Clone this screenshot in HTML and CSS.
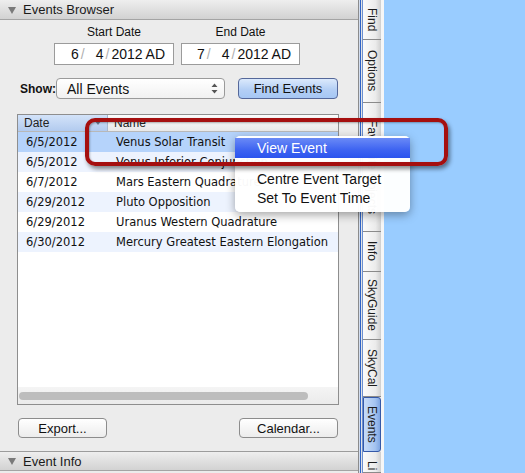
FILE: index.html
```html
<!DOCTYPE html>
<html lang="en">
<head>
    <meta charset="UTF-8">
    <title>Events Browser</title>
    <link rel="stylesheet" href="styles.css">
</head>
<body>
    <div class="app">
        <div class="panel">
            <div class="section-head"><span class="disclosure"></span>Events Browser</div>
            <div class="browser">
                <div class="dates">
                    <div class="date-group">
                        <div class="date-label">Start Date</div>
                        <div class="date-field start">
                            <span>6</span><span class="sep">/</span><span class="day">4</span><span class="sep">/</span><span>2012</span><span class="era">AD</span>
                        </div>
                    </div>
                    <div class="date-group">
                        <div class="date-label">End Date</div>
                        <div class="date-field end">
                            <span>7</span><span class="sep">/</span><span class="day">4</span><span class="sep">/</span><span>2012</span><span class="era">AD</span>
                        </div>
                    </div>
                </div>
                <div class="show-row">
                    <span class="show-label">Show:</span>
                    <div class="select">
                        <span class="select-value">All Events</span>
                        <svg class="stepper" width="7" height="11" viewBox="0 0 7 11">
                            <path d="M0.5 4 L3.5 0.5 L6.5 4 Z M0.5 7 L3.5 10.5 L6.5 7 Z" fill="#555"/>
                        </svg>
                    </div>
                    <button class="btn btn-blue">Find Events</button>
                </div>
                <div class="table">
                    <div class="thead">
                        <div class="th th-date sorted">Date<span class="sort"></span></div>
                        <div class="th th-name">Name</div>
                    </div>
                    <div class="tbody">
                        <div class="tr selected"><span class="td-date">6/5/2012</span><span>Venus Solar Transit</span></div>
                        <div class="tr alt"><span class="td-date">6/5/2012</span><span>Venus Inferior Conjunction</span></div>
                        <div class="tr"><span class="td-date">6/7/2012</span><span>Mars Eastern Quadrature</span></div>
                        <div class="tr alt"><span class="td-date">6/29/2012</span><span>Pluto Opposition</span></div>
                        <div class="tr"><span class="td-date">6/29/2012</span><span>Uranus Western Quadrature</span></div>
                        <div class="tr alt"><span class="td-date">6/30/2012</span><span>Mercury Greatest Eastern Elongation</span></div>
                    </div>
                    <div class="hscroll"><div class="thumb"></div></div>
                </div>
                <div class="actions">
                    <button class="btn export">Export...</button>
                    <button class="btn calendar">Calendar...</button>
                </div>
            </div>
            <div class="section-head foot"><span class="disclosure"></span>Event Info</div>
        </div>
        <div class="divider"></div>
        <div class="tabs">
            <div class="tab t-find">Find</div>
            <div class="tab t-options">Options</div>
            <div class="tab t-fav">Favourite Objects</div>
            <div class="tab t-info">Info</div>
            <div class="tab t-guide">SkyGuide</div>
            <div class="tab t-cal">SkyCal</div>
            <div class="tab t-events active">Events</div>
            <div class="tab t-live">Li</div>
        </div>
        <div class="sky"></div>
    </div>

    <!-- right-click menu on the selected row -->
    <div class="menu">
        <div class="menu-item hot">View Event</div>
        <div class="menu-sep"></div>
        <div class="menu-item">Centre Event Target</div>
        <div class="menu-item">Set To Event Time</div>
    </div>
    <div class="callout"></div>
</body>
</html>
```

FILE: styles.css
```css
body {
    margin: 0;
    font-family: "Liberation Sans", Arial, sans-serif;
    font-size: 13px;
    color: #111;
    overflow: hidden;
}

.app {
    display: flex;
    height: 473px;
    width: 525px;
}

/* ---- left drawer ---- */

.panel {
    width: 358px;
    display: flex;
    flex-direction: column;
    background: #ececec;
}

.section-head {
    height: 19px;
    line-height: 19px;
    border-bottom: 1px solid #a4a4a4;
    background: linear-gradient(#eeeeee, #d2d2d2);
    font-size: 13px;
    padding-left: 8px;
    display: flex;
    align-items: center;
    color: #1a1a1a;
}

.section-head.foot {
    border-top: 1px solid #9c9c9c;
    height: 18px;
    margin-bottom: 2px;
}

.disclosure {
    width: 0;
    height: 0;
    border-left: 4px solid transparent;
    border-right: 4px solid transparent;
    border-top: 7px solid #7a7a7a;
    margin-right: 7px;
    margin-top: 1px;
}

.browser {
    flex: 1;
    display: flex;
    flex-direction: column;
    padding: 0 19px 0 17px;
}

.dates {
    display: flex;
    gap: 7px;
    padding-left: 37px;
    margin-top: 5px;
}

.date-group {
    display: flex;
    flex-direction: column;
    align-items: center;
}

.date-label {
    font-size: 12px;
    line-height: 14px;
}

.date-field {
    margin-top: 4px;
    height: 20px;
    border: 1px solid #9b9b9b;
    background: #fff;
    display: flex;
    align-items: center;
    justify-content: flex-end;
    padding-right: 8px;
    font-size: 14px;
    box-sizing: content-box;
}

.date-field.start { width: 110px; }
.date-field.end { width: 109px; }

.date-field .sep {
    color: #b0b0b0;
    margin: 0 2px;
}

.date-field .day { margin-left: 9px; }
.date-field .era { margin-left: 3px; }

.show-row {
    display: flex;
    align-items: center;
    margin-top: 13px;
    height: 21px;
}

.show-label {
    font-weight: bold;
    font-size: 12px;
    margin-left: 3px;
    width: 36px;
}

.select {
    width: 151px;
    height: 19px;
    border: 1px solid #9a9a9a;
    border-radius: 4px;
    background: linear-gradient(#ffffff, #f1f1f1);
    display: flex;
    align-items: center;
    justify-content: space-between;
    padding: 0 6px 0 10px;
    font-size: 14px;
}

.stepper {
    display: block;
}

.btn {
    font-family: "Liberation Sans", Arial, sans-serif;
    font-size: 13px;
    height: 21px;
    border: 1px solid #8c8c8c;
    border-radius: 4px;
    background: linear-gradient(#ffffff, #ececec);
    color: #111;
    padding: 0;
}

.btn-blue {
    margin-left: 13px;
    width: 100px;
    background: linear-gradient(#dbe9fc, #b4cff5 55%, #a6c7f4);
    border-color: #55689a;
}

.table {
    margin-top: 15px;
    width: 320px;
    height: 289px;
    border: 1px solid #8e8e8e;
    background: #fff;
    display: flex;
    flex-direction: column;
}

.thead {
    display: flex;
    height: 16px;
    border-bottom: 1px solid #b8b8b8;
    background: linear-gradient(#fcfcfc, #e8e8e8);
    font-size: 12px;
}

.th {
    line-height: 16px;
    padding-left: 6px;
    color: #222;
}

.th-date {
    width: 83px;
    border-right: 1px solid #a8b8d0;
    position: relative;
}

.th-date.sorted {
    background: linear-gradient(#d3e3f9, #b2cbef);
}

.sort {
    position: absolute;
    right: 6px;
    top: 6px;
    border-left: 3px solid transparent;
    border-right: 3px solid transparent;
    border-top: 4px solid #6b7a90;
}

.tbody {
    flex: 1;
    font-family: "DejaVu Sans", sans-serif;
    font-size: 11.5px;
}

.tr {
    display: flex;
    height: 20px;
    line-height: 20px;
    white-space: nowrap;
}

.tr.alt { background: #edf3fe; }
.tr.selected { background: #b5d3fb; }

.td-date {
    width: 90px;
    padding-left: 8px;
}

.hscroll {
    height: 17px;
    background: linear-gradient(#f4f4f4, #ebebeb);
    display: flex;
    align-items: center;
    padding-left: 1px;
}

.thumb {
    width: 289px;
    height: 8px;
    border-radius: 4px;
    background: #bdbdbd;
}

.actions {
    display: flex;
    justify-content: space-between;
    margin-top: 13px;
    padding-left: 1px;
}

.btn.export { width: 89px; height: 20px; }
.btn.calendar { width: 99px; height: 20px; margin-right: 1px; }

/* ---- splitter and side tabs ---- */

.divider {
    width: 5px;
    background: linear-gradient(to right, #8c8c8c 0 1px, #d3def0 1px 2px, #2f63c6 2px 3px, #e4e4e4 3px 4px, #6d90cf 4px 5px);
}

.tabs {
    width: 18px;
    border-right: 3px solid #f6f6f6;
    background: #e6e6e6;
    display: flex;
    flex-direction: column;
    overflow: hidden;
}

.tab {
    writing-mode: vertical-rl;
    flex: none;
    display: flex;
    align-items: center;
    justify-content: center;
    font-size: 12px;
    color: #1c1c1c;
    background: linear-gradient(to right, #fbfbfb, #ebebeb 70%, #cfcfcf);
    border-bottom: 1px solid #8a8a8a;
    box-sizing: border-box;
    white-space: nowrap;
}

.t-find { height: 40px; }
.t-options { height: 63px; }
.t-fav { height: 129px; }
.t-info { height: 40px; }
.t-guide { height: 68px; }
.t-cal { height: 57px; }
.t-events { height: 55px; }
.t-live { height: 21px; justify-content: flex-start; padding-top: 9px; }

.tab.active {
    background: linear-gradient(to right, #c8dcf8, #a4c3f0 70%, #7fa6e2);
    border: 1px solid #3559a8;
    border-radius: 0 3px 3px 0;
}

.sky {
    flex: 1;
    background: #99ccff;
}

/* ---- context menu ---- */

.menu {
    position: absolute;
    left: 235px;
    top: 136px;
    width: 175px;
    padding: 2px 0 4px;
    background: rgba(255, 255, 255, 0.97);
    border-radius: 5px;
    box-shadow: 0 3px 10px rgba(0, 0, 0, 0.35);
    font-size: 14px;
}

.menu-item {
    height: 19px;
    line-height: 19px;
    padding-left: 22px;
    color: #111;
}

.menu-item.hot {
    height: 20px;
    line-height: 20px;
    color: #fff;
    background: linear-gradient(#6a8af6, #3d63f1 60%, #2b54ee);
}

.menu-sep {
    height: 1px;
    margin: 6px 0 5px;
    background: #e2e2e2;
}

.callout {
    position: absolute;
    left: 85px;
    top: 118px;
    width: 355px;
    height: 40px;
    border: 4px solid #a50f0f;
    border-radius: 10px;
    box-shadow: 2px 3px 4px rgba(0, 0, 0, 0.45), inset 1px 1px 2px rgba(0, 0, 0, 0.3);
}
```
